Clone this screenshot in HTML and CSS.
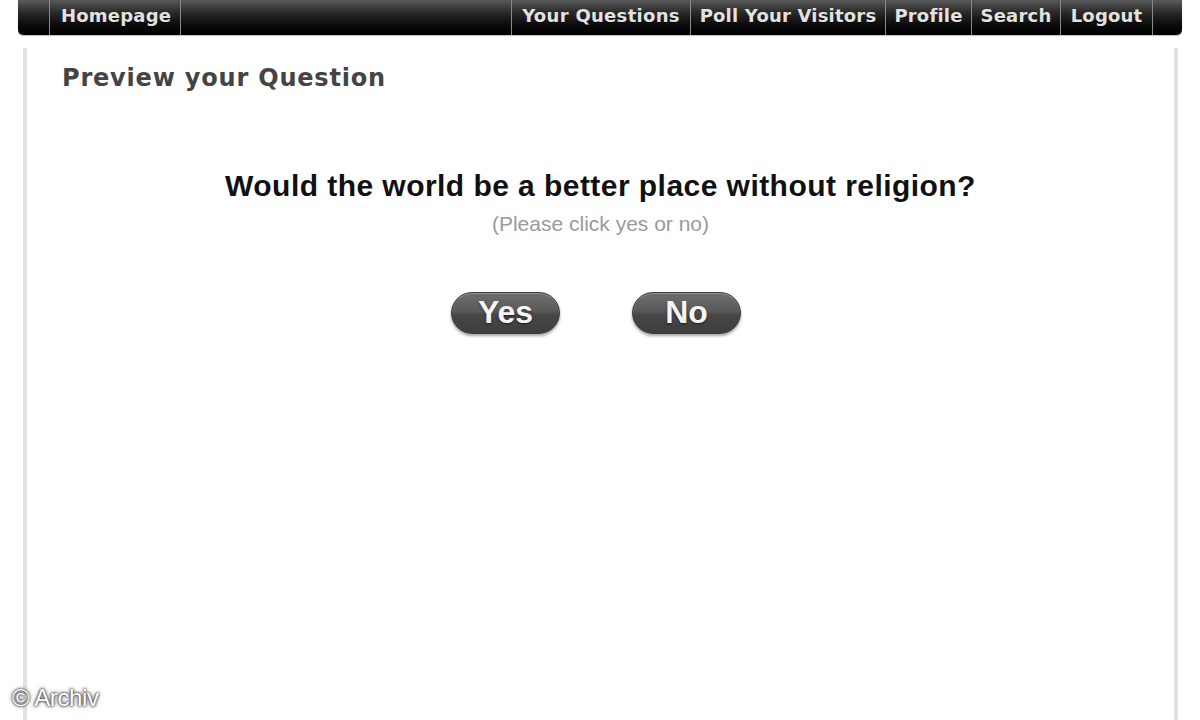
FILE: index.html
```html
<!DOCTYPE html>
<html>
<head>
<meta charset="utf-8">
<link rel="stylesheet" href="styles.css">
</head>
<body>
<nav class="nav">
  <div class="nav-left">
    <a class="nav-item home">Homepage</a>
  </div>
  <div class="nav-right">
    <a class="nav-item w-q">Your Questions</a>
    <a class="nav-item w-p">Poll Your Visitors</a>
    <a class="nav-item w-pr">Profile</a>
    <a class="nav-item w-s">Search</a>
    <a class="nav-item w-l">Logout</a>
  </div>
</nav>
<main class="panel">
  <h1 class="title">Preview your Question</h1>
  <section class="question">
    <h2 class="q-text">Would the world be a better place without religion?</h2>
    <p class="q-hint">(Please click yes or no)</p>
    <div class="buttons">
      <button class="pill">Yes</button>
      <button class="pill">No</button>
    </div>
  </section>
</main>
<div class="credit">© Archiv</div>
</body>
</html>
```
FILE: styles.css
```css
html, body {
  margin: 0;
  padding: 0;
  background: #fff;
  height: 720px;
  overflow: hidden;
}
body {
  font-family: "Liberation Sans", Arial, sans-serif;
  position: relative;
}
.nav {
  margin: 0 18px;
  height: 35px;
  background: linear-gradient(to bottom, #5a5a5a 0%, #2a2a2a 35%, #080808 75%, #000 100%);
  border-radius: 0 0 5px 5px;
  display: flex;
  justify-content: space-between;
  padding: 0 29px 0 31px;
  box-shadow: 0 1px 1px rgba(0,0,0,0.25);
}
.nav-left, .nav-right {
  display: flex;
  height: 100%;
}
.nav-right {
  border-right: 1px solid #8a8a8a;
}
.nav-item {
  display: flex;
  align-items: center;
  justify-content: center;
  height: 100%;
  border-left: 1px solid #8a8a8a;
  color: #e2e2e2;
  font-family: "DejaVu Sans", sans-serif;
  font-weight: bold;
  font-size: 18px;
  padding-bottom: 5px;
  box-sizing: border-box;
  text-shadow: 0 1px 0 rgba(0,0,0,0.6);
  letter-spacing: 0.2px;
}
.home { width: 132px; border-right: 1px solid #8a8a8a; justify-content: flex-start; padding-left: 11px; }
.w-q { width: 179px; letter-spacing: 0.3px; }
.w-p { width: 195px; }
.w-pr { width: 86px; }
.w-s { width: 89px; }
.w-l { width: 92px; }

.panel {
  position: relative;
  margin: 13px 22px 0 23px;
  height: 700px;
  border-left: 4px solid #e2e2e2;
  border-right: 4px solid #e2e2e2;
  box-sizing: border-box;
  padding: 14px 0 0 35px;
}
.title {
  margin: 0;
  font-family: "DejaVu Sans", sans-serif;
  font-weight: bold;
  font-size: 24px;
  color: #444;
  letter-spacing: 0.8px;
  line-height: 32px;
}
.question {
  margin-left: -35px;
  text-align: center;
  padding-top: 75px;
}
.q-text {
  margin: 0;
  font-family: "Liberation Sans", Arial, sans-serif;
  font-weight: bold;
  font-size: 30px;
  line-height: 34px;
  color: #111;
  letter-spacing: 0.45px;
}
.q-hint {
  margin: 8px 0 0;
  font-size: 21px;
  color: #9a9a9a;
  line-height: 26px;
}
.buttons {
  display: flex;
  justify-content: center;
  gap: 72px;
  margin-top: 55px;
  padding-right: 9px;
}
.pill {
  width: 109px;
  height: 42px;
  border-radius: 21px;
  border: 1px solid #3a3a3a;
  background: linear-gradient(to bottom, #6e6e6e 0%, #5a5a5a 45%, #464646 55%, #3e3e3e 100%);
  box-shadow: 0 2px 3px rgba(0,0,0,0.35), inset 0 1px 0 rgba(255,255,255,0.25);
  color: #f4f4f4;
  font-family: "Liberation Sans", Arial, sans-serif;
  font-weight: bold;
  font-size: 32px;
  padding: 0 0 2px;
  text-shadow: 0 1px 2px rgba(0,0,0,0.6);
}
.credit {
  position: absolute;
  left: 12px;
  top: 684px;
  font-family: "Liberation Sans", Arial, sans-serif;
  font-size: 24px;
  letter-spacing: -0.4px;
  color: #fff;
  text-shadow: 0 0 2px #333, 0 0 3px #555, 0 0 4px #777;
}
```
